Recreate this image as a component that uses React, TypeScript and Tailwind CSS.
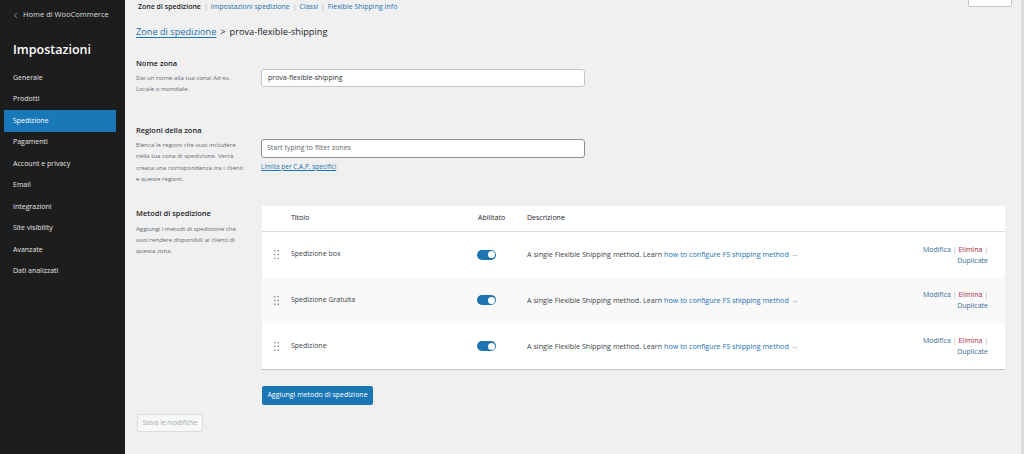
import { ChevronLeft } from "lucide-react";

const menuItems = [
  "Generale",
  "Prodotti",
  "Spedizione",
  "Pagamenti",
  "Account e privacy",
  "Email",
  "Integrazioni",
  "Site visibility",
  "Avanzate",
  "Dati analizzati",
];

const methods = [
  { title: "Spedizione box", bg: "bg-white" },
  { title: "Spedizione Gratuita", bg: "bg-[#f9f9f9]" },
  { title: "Spedizione", bg: "bg-white" },
];

const Sidebar = () => (
  <div className="w-[125px] shrink-0 bg-[#1d1d1d] text-[#f0f0f1]">
    <div className="h-[30px] flex items-center pl-[11px] text-[7.5px] text-[#dcdcde]">
      <ChevronLeft size={9} strokeWidth={1.5} />
      <span className="ml-[3px]">Home di WooCommerce</span>
    </div>
    <div className="h-[37px] pt-[12px] pl-[13px]">
      <div className="text-[12.5px] leading-[16px] font-semibold text-white">Impostazioni</div>
    </div>
    {menuItems.map((item) => (
      <div
        key={item}
        className={
          item === "Spedizione"
            ? "h-[21.5px] mx-[4px] w-[112px] pl-[9px] flex items-center bg-[#1979b8] text-white text-[7px]"
            : "h-[21.5px] pl-[13px] flex items-center text-[7px] text-[#e4e4e4]"
        }
      >
        {item}
      </div>
    ))}
  </div>
);

const DragHandle = () => (
  <svg width="5" height="9" viewBox="0 0 5 9" className="text-[#646970]">
    {[0.8, 4.5, 8.2].map((y) => (
      <g key={y}>
        <circle cx="0.8" cy={y} r="0.7" fill="currentColor" />
        <circle cx="4.2" cy={y} r="0.7" fill="currentColor" />
      </g>
    ))}
  </svg>
);

const Toggle = () => (
  <div className="w-[19px] h-[10px] rounded-full bg-[#1e74b1] flex items-center justify-end pr-[1.5px]">
    <div className="w-[7px] h-[7px] rounded-full bg-white" />
  </div>
);

const MethodsTable = () => (
  <div className="w-[743px] bg-white border-b border-[#c3c4c7] text-[7px] text-[#3c434a]">
    <div className="h-[26px] flex items-center border-b border-[#dcdcde] text-[#1d2327]">
      <div className="w-[29px]" />
      <div className="w-[187px]">Titolo</div>
      <div className="w-[49px]">Abilitato</div>
      <div>Descrizione</div>
    </div>
    {methods.map((m) => (
      <div key={m.title} className={`h-[45.7px] flex items-center ${m.bg}`}>
        <div className="w-[29px] pl-[12px] flex items-center">
          <DragHandle />
        </div>
        <div className="w-[186px]">{m.title}</div>
        <div className="w-[50px]">
          <Toggle />
        </div>
        <div className="flex-1 text-[7.2px]">
          A single Flexible Shipping method. Learn{" "}
          <span className="text-[#2271b1]">how to configure FS shipping method →</span>
        </div>
        <div className="pr-[17px] text-right leading-[11px]">
          <div>
            <span className="text-[#3a6d96]">Modifica</span>
            <span className="text-[#a7aaad]"> | </span>
            <span className="text-[#a4263a]">Elimina</span>
            <span className="text-[#a7aaad]"> |</span>
          </div>
          <div className="text-[#3a6d96]">Duplicate</div>
        </div>
      </div>
    ))}
  </div>
);

export default function App() {
  return (
    <div
      className="flex h-[454px] w-full overflow-hidden"
      style={{ fontFamily: '"Open Sans", "Noto Sans", sans-serif' }}
    >
      <Sidebar />
      <div className="flex-1 bg-[#f0f0f1] border-r-[3px] border-[#dcdcde] pl-[11px] text-[#1d2327]">
        <div className="flex justify-between">
          <div className="pl-[2px] h-[14px] flex items-center text-[7px] text-[#2271b1]">
            <span className="font-semibold text-[#1d2327]">Zone di spedizione</span>
            <span className="text-[#a7aaad] mx-[3px]">|</span>
            <span>Impostazioni spedizione</span>
            <span className="text-[#a7aaad] mx-[3px]">|</span>
            <span>Classi</span>
            <span className="text-[#a7aaad] mx-[3px]">|</span>
            <span>Flexible Shipping Info</span>
          </div>
          <div className="mr-[9px] w-[44px] h-[7px] bg-white border border-t-0 border-[#c3c4c7] rounded-b-[2px]" />
        </div>

        <div className="h-[36px] flex items-center text-[9.2px] text-[#1d2327]">
          <span className="text-[#2271b1] underline underline-offset-2">Zone di spedizione</span>
          <span className="mx-[4px]">&gt;</span>
          <span className="font-medium">prova-flexible-shipping</span>
        </div>

        {/* Nome zona */}
        <div className="flex mt-[6px]">
          <div className="w-[125px]">
            <div className="text-[7.5px] leading-[14px] font-semibold text-[#1d2327]">Nome zona</div>
            <div className="mt-[1.5px] w-[110px] text-[6.1px] leading-[11px] text-[#646970]">
              Dai un nome alla tua zona! Ad es. Locale o mondiale.
            </div>
          </div>
          <div className="pt-[13px]">
            <div className="w-[324px] h-[18px] bg-white border border-[#c3c4c7] rounded-[3px] flex items-center px-[6px] text-[7px] text-[#2c3338]">
              prova-flexible-shipping
            </div>
          </div>
        </div>

        {/* Regioni */}
        <div className="flex mt-[29px]">
          <div className="w-[125px]">
            <div className="text-[7.5px] leading-[14px] font-semibold text-[#1d2327]">Regioni della zona</div>
            <div className="mt-[2px] w-[112px] text-[6.1px] leading-[11.6px] text-[#646970]">
              Elenca le regioni che vuoi includere nella tua zona di spedizione. Verrà creata una corrispondenza tra i clienti e queste regioni.
            </div>
          </div>
          <div className="pt-[16px]">
            <div className="w-[324px] h-[19px] bg-white border border-[#8c8f94] rounded-[3px] flex items-center px-[5px] text-[7px] text-[#646970]">
              Start typing to filter zones
            </div>
            <div className="mt-[3.5px] text-[6.5px] leading-[11px] text-[#2271b1] underline">
              Limita per C.A.P. specifici
            </div>
          </div>
        </div>

        {/* Metodi */}
        <div className="flex mt-[21px]">
          <div className="w-[126px]">
            <div className="text-[7.5px] leading-[14px] font-semibold text-[#1d2327]">Metodi di spedizione</div>
            <div className="mt-[3.5px] w-[110px] text-[6.1px] leading-[11px] text-[#646970]">
              Aggiungi i metodi di spedizione che vuoi rendere disponibili ai clienti di questa zona.
            </div>
          </div>
          <div>
            <MethodsTable />
            <div className="mt-[16px] w-[111px] h-[19px] bg-[#1a76b4] rounded-[2px] flex items-center justify-center text-[7px] text-white">
              Aggiungi metodo di spedizione
            </div>
          </div>
        </div>

        <div className="mt-[9px] ml-[1px] w-[66px] h-[18px] bg-[#f6f7f7] border border-[#dcdcde] rounded-[2px] flex items-center justify-center text-[6.5px] text-[#a7aaad]">
          Salva le modifiche
        </div>
      </div>
    </div>
  );
}
